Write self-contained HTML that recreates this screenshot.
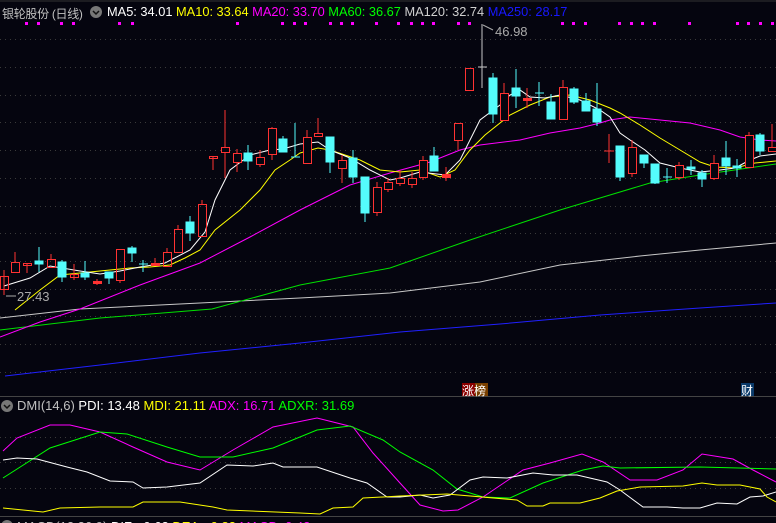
<!DOCTYPE html><html style="height:523px;overflow:hidden"><head><meta charset="utf-8"><style>
html,body{margin:0;background:#05050f;width:776px;height:523px;overflow:hidden;font-family:"Liberation Sans","Noto Sans CJK SC",sans-serif}
body{position:relative}
.t{position:absolute;font-size:13px;white-space:nowrap}
</style></head><body>
<svg width="776" height="523" style="position:absolute;left:0;top:0" xmlns="http://www.w3.org/2000/svg">
<rect width="776" height="523" fill="#05050f"/>
<line x1="0" y1="1" x2="776" y2="1" stroke="#333" stroke-width="1"/>
<g stroke="#3a3a3a" stroke-dasharray="1,4" stroke-width="1">
<line x1="0" y1="39.5" x2="776" y2="39.5"/><line x1="0" y1="67.5" x2="776" y2="67.5"/><line x1="0" y1="95.5" x2="776" y2="95.5"/><line x1="0" y1="122.5" x2="776" y2="122.5"/><line x1="0" y1="150.5" x2="776" y2="150.5"/><line x1="0" y1="178.5" x2="776" y2="178.5"/><line x1="0" y1="206.5" x2="776" y2="206.5"/><line x1="0" y1="233.5" x2="776" y2="233.5"/><line x1="0" y1="261.5" x2="776" y2="261.5"/><line x1="0" y1="289.5" x2="776" y2="289.5"/><line x1="0" y1="316.5" x2="776" y2="316.5"/><line x1="0" y1="344.5" x2="776" y2="344.5"/><line x1="0" y1="372.5" x2="776" y2="372.5"/>
<line x1="0" y1="437.5" x2="776" y2="437.5"/><line x1="0" y1="462.5" x2="776" y2="462.5"/><line x1="0" y1="488.5" x2="776" y2="488.5"/>
</g>
<line x1="0" y1="396.5" x2="776" y2="396.5" stroke="#444"/>
<line x1="0" y1="516.5" x2="776" y2="516.5" stroke="#444"/>
<g fill="#ff00ff">
<rect x="25" y="22" width="3" height="3"/><rect x="37" y="22" width="3" height="3"/><rect x="60" y="22" width="3" height="3"/><rect x="72" y="22" width="3" height="3"/><rect x="118" y="22" width="3" height="3"/><rect x="131" y="22" width="3" height="3"/><rect x="236" y="22" width="3" height="3"/><rect x="281" y="22" width="3" height="3"/><rect x="293" y="22" width="3" height="3"/><rect x="304" y="22" width="3" height="3"/><rect x="329" y="22" width="3" height="3"/><rect x="340" y="22" width="3" height="3"/><rect x="351" y="22" width="3" height="3"/><rect x="375" y="22" width="3" height="3"/><rect x="397" y="22" width="3" height="3"/><rect x="410" y="22" width="3" height="3"/><rect x="421" y="22" width="3" height="3"/><rect x="432" y="22" width="3" height="3"/><rect x="457" y="22" width="3" height="3"/><rect x="468" y="22" width="3" height="3"/><rect x="561" y="22" width="3" height="3"/><rect x="572" y="22" width="3" height="3"/><rect x="584" y="22" width="3" height="3"/><rect x="618" y="22" width="3" height="3"/><rect x="630" y="22" width="3" height="3"/><rect x="641" y="22" width="3" height="3"/><rect x="653" y="22" width="3" height="3"/><rect x="688" y="22" width="3" height="3"/><rect x="736" y="22" width="3" height="3"/><rect x="747" y="22" width="3" height="3"/><rect x="759" y="22" width="3" height="3"/><rect x="771" y="22" width="3" height="3"/>
</g>
<g fill="none" stroke-width="1">
<polyline stroke="#2020ff" points="5,376 100,365 200,353 300,343 400,332 500,324 600,315 700,308 776,303"/>
<polyline stroke="#c8c8c8" points="0,318 80,309 200,303 300,298 390,293 480,282 560,265 640,256 700,250 776,243"/>
<polyline stroke="#00e000" points="0,330 100,318 212,309 300,285 390,268 470,240 560,210 650,183 700,175 776,164"/>
<polyline stroke="#ff00ff" points="0,337 40,322 80,309 140,285 200,263 250,237 300,210 350,185 390,173 430,162 460,150 480,145 520,140 550,133 580,128 600,123 610,120 630,117 660,120 690,123 720,130 740,137 760,140 776,141"/>
<polyline stroke="#ffff00" points="15,310 40,290 60,275 90,272 110,270 130,268 150,267 170,265 185,258 200,250 215,230 240,210 260,190 275,170 290,160 300,153 318,148 330,150 345,155 360,160 380,170 400,172 420,170 440,177 455,170 470,150 485,135 510,115 530,105 550,97 570,95 590,100 610,108 620,113 640,125 660,138 680,150 700,162 715,167 735,168 755,163 776,161"/>
<polyline stroke="#ffffff" points="4,286 30,278 50,266 80,271 100,274 120,271 140,267 165,263 190,250 205,232 215,200 230,170 250,155 270,150 283,149 300,144 318,142 330,150 350,158 370,170 390,180 400,178 420,172 445,175 460,160 480,120 500,105 510,95 520,90 530,97 545,98 560,95 580,100 600,110 610,117 620,133 630,140 645,150 660,163 680,168 700,172 720,170 735,168 750,160 760,156 776,154"/>
</g>
<g stroke="#ff3232" fill="none">
<line x1="4" y1="270" x2="4" y2="295"/><rect x="0.5" y="276.5" width="8" height="13"/>
<line x1="15" y1="252" x2="15" y2="262"/><rect x="11.5" y="262.5" width="8" height="10"/>
<line x1="27" y1="263" x2="27" y2="273"/><rect x="23.5" y="263.5" width="8" height="2"/>
<line x1="51" y1="254" x2="51" y2="259"/><rect x="47.5" y="259.5" width="8" height="8"/>
<line x1="74" y1="264" x2="74" y2="280"/><rect x="70.5" y="274.5" width="8" height="3"/>
<line x1="97" y1="279" x2="97" y2="285"/><rect x="93.5" y="281.5" width="8" height="2" fill="#ff3232"/>
<line x1="120" y1="280" x2="120" y2="283"/><rect x="116.5" y="249.5" width="8" height="31"/>
<line x1="155" y1="258" x2="155" y2="263"/><rect x="151.5" y="263.5" width="8" height="2" fill="#ff3232"/>
<line x1="167" y1="248" x2="167" y2="252"/><rect x="163.5" y="252.5" width="8" height="14"/>
<line x1="178" y1="225" x2="178" y2="229"/><rect x="174.5" y="229.5" width="8" height="23"/>
<line x1="202" y1="200" x2="202" y2="204"/><rect x="198.5" y="204.5" width="8" height="32"/>
<line x1="213" y1="157" x2="213" y2="170"/><rect x="209.5" y="156.5" width="8" height="2"/>
<line x1="225" y1="110" x2="225" y2="178"/><rect x="221.5" y="147.5" width="8" height="5" fill="#05050f"/>
<line x1="237" y1="149" x2="237" y2="172"/><rect x="233.5" y="153.5" width="8" height="9" fill="#05050f"/>
<line x1="260" y1="150" x2="260" y2="167"/><rect x="256.5" y="157.5" width="8" height="7" fill="#05050f"/>
<line x1="272" y1="127" x2="272" y2="160"/><rect x="268.5" y="128.5" width="8" height="26" fill="#05050f"/>
<line x1="307" y1="130" x2="307" y2="163"/><rect x="303.5" y="137.5" width="8" height="26" fill="#05050f"/>
<line x1="318" y1="118" x2="318" y2="136"/><rect x="314.5" y="133.5" width="8" height="3" fill="#05050f"/>
<line x1="342" y1="155" x2="342" y2="183"/><rect x="338.5" y="160.5" width="8" height="8" fill="#05050f"/>
<line x1="377" y1="182" x2="377" y2="216"/><rect x="373.5" y="187.5" width="8" height="25" fill="#05050f"/>
<line x1="388" y1="178" x2="388" y2="192"/><rect x="384.5" y="182.5" width="8" height="7" fill="#05050f"/>
<line x1="400" y1="170" x2="400" y2="186"/><rect x="396.5" y="178.5" width="8" height="5" fill="#05050f"/>
<line x1="412" y1="172" x2="412" y2="188"/><rect x="408.5" y="178.5" width="8" height="6" fill="#05050f"/>
<line x1="423" y1="156" x2="423" y2="180"/><rect x="419.5" y="160.5" width="8" height="17" fill="#05050f"/>
<line x1="446" y1="167" x2="446" y2="181"/><rect x="442.5" y="174.5" width="8" height="3" fill="#ff3232"/>
<line x1="458" y1="140" x2="458" y2="150"/><rect x="454.5" y="123.5" width="8" height="17" fill="#05050f"/>
<rect x="465.5" y="68.5" width="8" height="22" fill="#05050f"/>
<line x1="504" y1="83" x2="504" y2="120"/><rect x="500.5" y="93.5" width="8" height="27" fill="#05050f"/>
<line x1="527" y1="88" x2="527" y2="108"/><rect x="523.5" y="98.5" width="8" height="2" fill="#ff3232"/>
<line x1="563" y1="80" x2="563" y2="87"/><rect x="559.5" y="87.5" width="8" height="32" fill="#05050f"/>
<line x1="609" y1="134" x2="609" y2="163"/><line x1="604" y1="151" x2="614" y2="151"/>
<line x1="632" y1="140" x2="632" y2="177"/><rect x="628.5" y="147.5" width="8" height="26" fill="#05050f"/>
<line x1="679" y1="162" x2="679" y2="180"/><rect x="675.5" y="165.5" width="8" height="12" fill="#05050f"/>
<line x1="714" y1="155" x2="714" y2="180"/><rect x="710.5" y="163.5" width="8" height="15" fill="#05050f"/>
<line x1="749" y1="132" x2="749" y2="168"/><rect x="745.5" y="135.5" width="8" height="32" fill="#05050f"/>
<line x1="772" y1="124" x2="772" y2="152"/><rect x="768.5" y="147.5" width="8" height="4" fill="#05050f"/>
</g>
<g stroke="#54fcfc" fill="#54fcfc">
<line x1="39" y1="247" x2="39" y2="272"/><rect x="35" y="261" width="8" height="3"/>
<line x1="62" y1="260" x2="62" y2="282"/><rect x="58" y="262" width="8" height="15"/>
<line x1="85" y1="261" x2="85" y2="280"/><rect x="81" y="273" width="8" height="4"/>
<line x1="109" y1="272" x2="109" y2="284"/><rect x="105" y="272" width="8" height="6"/>
<line x1="132" y1="246" x2="132" y2="262"/><rect x="128" y="248" width="8" height="5"/>
<line x1="143" y1="260" x2="143" y2="272"/><line x1="139" y1="264" x2="148" y2="264"/>
<line x1="190" y1="216" x2="190" y2="241"/><rect x="186" y="222" width="8" height="11"/>
<line x1="248" y1="145" x2="248" y2="170"/><rect x="244" y="153" width="8" height="8"/>
<line x1="283" y1="136" x2="283" y2="152"/><rect x="279" y="139" width="8" height="13"/>
<line x1="295" y1="123" x2="295" y2="157"/><line x1="291" y1="157" x2="300" y2="157"/>
<line x1="330" y1="137" x2="330" y2="173"/><rect x="326" y="137" width="8" height="25"/>
<line x1="353" y1="150" x2="353" y2="183"/><rect x="349" y="158" width="8" height="19"/>
<line x1="365" y1="177" x2="365" y2="222"/><rect x="361" y="177" width="8" height="36"/>
<line x1="434" y1="147" x2="434" y2="171"/><rect x="430" y="156" width="8" height="15"/>
<line x1="493" y1="73" x2="493" y2="123"/><rect x="489" y="78" width="8" height="36"/>
<line x1="516" y1="69" x2="516" y2="108"/><rect x="512" y="88" width="8" height="8"/>
<line x1="539" y1="82" x2="539" y2="106"/><line x1="535" y1="93" x2="544" y2="93"/>
<line x1="551" y1="94" x2="551" y2="119"/><rect x="547" y="102" width="8" height="17"/>
<line x1="574" y1="87" x2="574" y2="104"/><rect x="570" y="89" width="8" height="13"/>
<line x1="586" y1="93" x2="586" y2="111"/><rect x="582" y="101" width="8" height="10"/>
<line x1="597" y1="83" x2="597" y2="126"/><rect x="593" y="109" width="8" height="13"/>
<line x1="620" y1="146" x2="620" y2="181"/><rect x="616" y="146" width="8" height="31"/>
<line x1="644" y1="155" x2="644" y2="168"/><rect x="640" y="155" width="8" height="8"/>
<line x1="655" y1="164" x2="655" y2="184"/><rect x="651" y="164" width="8" height="19"/>
<line x1="667" y1="168" x2="667" y2="183"/><line x1="663" y1="177" x2="672" y2="177"/>
<line x1="691" y1="160" x2="691" y2="175"/><rect x="687" y="167" width="8" height="2"/>
<line x1="702" y1="170" x2="702" y2="187"/><rect x="698" y="173" width="8" height="6"/>
<line x1="726" y1="141" x2="726" y2="175"/><rect x="722" y="158" width="8" height="8"/>
<line x1="737" y1="159" x2="737" y2="177"/><rect x="733" y="166" width="8" height="2"/>
<line x1="760" y1="133" x2="760" y2="155"/><rect x="756" y="135" width="8" height="16"/>
</g>
<line x1="482" y1="24" x2="482" y2="88" stroke="#c8c8c8"/><line x1="478" y1="67" x2="487" y2="67" stroke="#c8c8c8"/>
<polyline points="483,25 493,30" stroke="#aaa" fill="none"/>
<polyline points="6,296 16,296" stroke="#aaa" fill="none"/>
<g fill="none" stroke-width="1">
<polyline stroke="#ff00ff" points="3,451 17,438 50,425 70,425 100,432 133,447 167,462 200,470 233,450 273,427 317,418 333,422 353,427 373,453 400,483 420,505 443,511 458,510 483,497 523,470 550,463 582,454 603,462 630,480 657,480 683,470 702,454 733,459 753,470 776,482"/>
<polyline stroke="#00ff00" points="3,478 50,448 100,432 127,434 167,447 200,457 233,457 273,448 317,430 350,426 383,440 400,452 433,470 457,489 483,497 510,498 543,483 583,470 603,466 620,468 700,467 776,469"/>
<polyline stroke="#ffffff" points="3,460 17,458 37,459 67,467 87,472 110,481 133,482 143,488 167,487 200,483 227,465 253,466 273,463 283,467 317,467 350,478 367,483 387,497 400,497 420,495 433,498 450,495 470,480 483,477 507,478 533,473 553,475 577,475 607,482 620,490 643,507 667,507 683,508 700,508 717,503 737,504 750,497 763,496 776,492"/>
<polyline stroke="#ffff00" points="3,508 43,512 60,508 100,507 133,507 143,502 180,502 213,507 227,510 300,513 320,514 333,508 353,507 363,498 383,497 400,496 447,494 517,500 527,506 543,506 550,503 580,503 600,498 617,491 640,487 683,486 702,483 717,485 740,485 760,489 767,497 776,502"/>
</g>
<circle cx="96" cy="12" r="6" fill="#777"/><polyline points="93,11 96,14 99,11" stroke="#111" stroke-width="1.5" fill="none"/>
<circle cx="7" cy="406" r="6" fill="#777"/><polyline points="4,405 7,408 10,405" stroke="#111" stroke-width="1.5" fill="none"/>
<circle cx="7" cy="526" r="6" fill="#777"/>
<rect x="462" y="383" width="13" height="13" fill="#8a0000"/><rect x="475" y="383" width="13" height="13" fill="#7a4000"/>
<rect x="741" y="383" width="13" height="13" fill="#0a3a6a"/>
</svg>
<div class="t" style="left:2px;top:5px;color:#c0c0c0;font-size:12px;letter-spacing:-0.3px">银轮股份 (日线)</div>
<div class="t" style="left:107px;top:4px;font-size:12.8px"><span style="color:#fff">MA5: 34.01</span> <span style="color:#ffff00">MA10: 33.64</span> <span style="color:#ff00ff">MA20: 33.70</span> <span style="color:#00ff00">MA60: 36.67</span> <span style="color:#d0d0d0">MA120: 32.74</span> <span style="color:#1818ff">MA250: 28.17</span></div>
<div class="t" style="left:495px;top:24px;color:#aaa">46.98</div>
<div class="t" style="left:17px;top:289px;color:#aaa">27.43</div>
<div class="t" style="left:462px;top:382px;color:#fff;font-size:12px">涨榜</div>
<div class="t" style="left:741px;top:382px;color:#fff;font-size:12px">财</div>
<div class="t" style="left:17px;top:398px"><span style="color:#c0c0c0">DMI(14,6)</span> <span style="color:#fff">PDI: 13.48</span> <span style="color:#ffff00">MDI: 21.11</span> <span style="color:#ff00ff">ADX: 16.71</span> <span style="color:#00ff00">ADXR: 31.69</span></div>
<div class="t" style="left:17px;top:519px;height:4px;overflow:hidden"><span style="color:#c0c0c0">MACD(12,26,9)</span> <span style="color:#fff">DIF: -0.62</span> <span style="color:#ffff00">DEA: -0.83</span> <span style="color:#ff00ff">MACD: 0.42</span></div>
</body></html>
